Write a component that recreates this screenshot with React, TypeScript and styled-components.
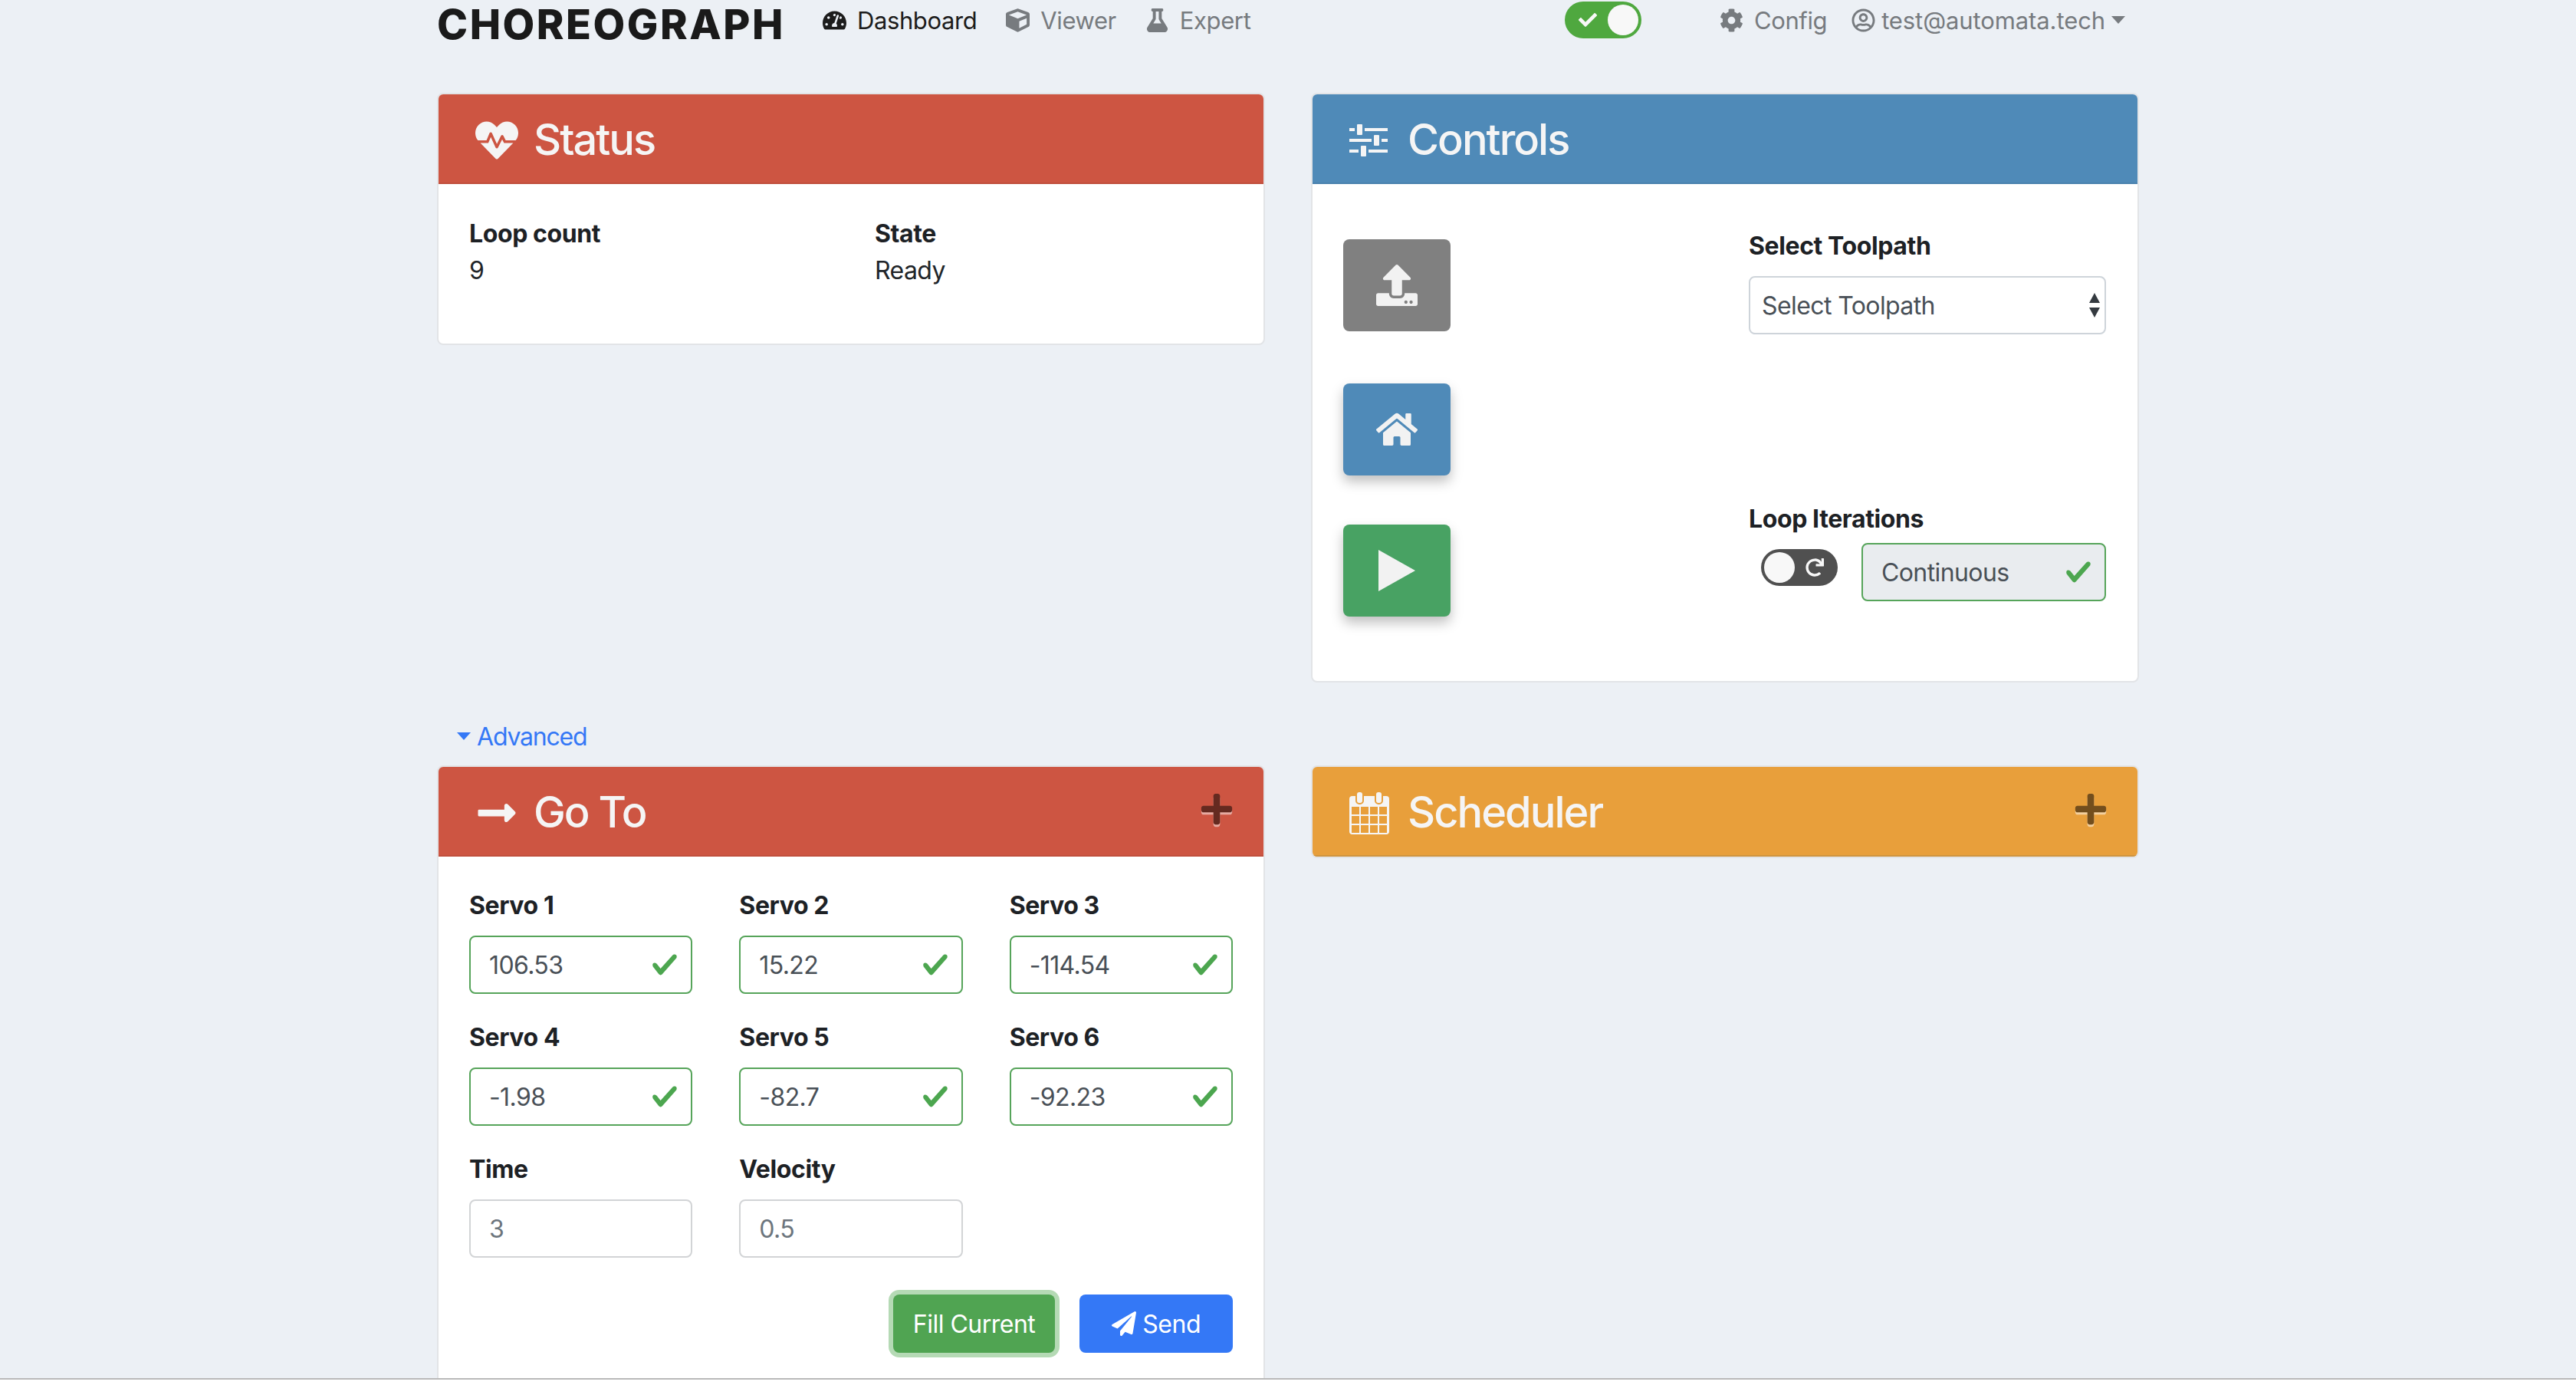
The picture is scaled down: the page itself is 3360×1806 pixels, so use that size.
import React from "react";
import styled, { createGlobalStyle } from "styled-components";
import {
  FaCheck,
  FaCog,
  FaCube,
  FaFlask,
  FaHeartbeat,
  FaHome,
  FaLongArrowAltRight,
  FaPaperPlane,
  FaPlus,
  FaRedo,
  FaRegUserCircle,
  FaTachometerAlt,
  FaUpload,
} from "react-icons/fa";

const GlobalStyle = createGlobalStyle`
  html, body {
    margin: 0;
    background: #fff;
    font-family: Inter, "Liberation Sans", sans-serif;
    font-size: 32px;
    color: #212529;
  }
  * { box-sizing: border-box; }
`;

const Page = styled.div`
  height: 1799px;
  overflow: hidden;
  background: #ecf0f5;
  border-bottom: 2px solid #b9b9b9;
`;

const Container = styled.div`
  width: 2220px;
  margin: 0 auto;
`;

const Navbar = styled.nav`
  height: 121px;
  display: flex;
  align-items: flex-start;
  padding-top: 2px;
`;

const Logo = styled.div`
  width: 503px;
  margin-top: 2px;
  line-height: 56px;
  font-size: 54px;
  font-weight: 800;
  color: #1a1a1a;
  letter-spacing: 2.5px;
  white-space: nowrap;
`;

const NavLink = styled.a<{ $active?: boolean; $gap?: number; $iconGap?: number }>`
  display: flex;
  align-items: center;
  height: 48px;
  gap: ${(p) => p.$iconGap ?? 14}px;
  margin-right: ${(p) => p.$gap ?? 38}px;
  color: ${(p) => (p.$active ? "#1c1c1c" : "#777b7f")};
  font-size: 31px;
  letter-spacing: -0.4px;
  white-space: nowrap;
  svg { font-size: 31px; }
`;

const UserLink = styled(NavLink)`
  letter-spacing: -0.1px;
`;

const NavRight = styled.div`
  margin-left: auto;
  margin-right: 18px;
  display: flex;
  align-items: flex-start;
`;

const Caret = styled.span`
  display: inline-block;
  border-top: 10px solid currentColor;
  border-left: 9px solid transparent;
  border-right: 9px solid transparent;
`;

const Toggle = styled.div<{ $on?: boolean; $top?: boolean }>`
  width: 100px;
  height: 48px;
  border-radius: 24px;
  padding: 4px;
  display: flex;
  flex-direction: ${(p) => (p.$on ? "row" : "row-reverse")};
  align-items: center;
  justify-content: space-between;
  background: ${(p) => (p.$on ? "#4fa83f" : "#505050")};
  color: #f8f8f8;
  font-size: 24px;
  margin-right: ${(p) => (p.$top ? 102 : 0)}px;
  svg { margin: 0 auto; }
`;

const Knob = styled.span`
  flex: none;
  width: 40px;
  height: 40px;
  border-radius: 50%;
  background: #f8f8f8;
`;

const Grid = styled.div`
  display: grid;
  grid-template-columns: 1080px 1080px;
  column-gap: 60px;
  align-items: start;
`;

const TopGrid = styled(Grid)`
  height: 805px;
`;

const Card = styled.section`
  background: #fff;
  border: 2px solid #e2e4e7;
  border-radius: 8px;
  overflow: hidden;
`;

const CardHeader = styled.header<{ $color: string; $edge: string }>`
  display: flex;
  align-items: center;
  height: 117px;
  padding: 4px 38px 0 48px;
  background: ${(p) => p.$color};
  border-bottom: 2px solid ${(p) => p.$edge};
  color: #f5f5f5;
`;

const HeaderIcon = styled.span`
  width: 76px;
  display: flex;
  font-size: 56px;
`;

const Title = styled.h3`
  margin: 0;
  font-size: 56px;
  font-weight: 500;
  letter-spacing: -2px;
  line-height: 1.2;
`;

const Expand = styled.span`
  margin-left: auto;
  margin-top: -10px;
  display: flex;
  font-size: 46px;
  color: #000;
  opacity: 0.5;
  filter: drop-shadow(0 3px 0 #fff);
`;

const StatusBody = styled.div`
  display: grid;
  grid-template-columns: 529px 1fr;
  padding: 41px 40px 71px;
  line-height: 48px;
`;

const Label = styled.div`
  font-weight: 700;
  line-height: 48px;
  letter-spacing: -0.4px;
  color: #1d2125;
`;

const Value = styled.div`
  letter-spacing: -0.6px;
`;

const ControlsBody = styled.div`
  display: grid;
  grid-template-columns: 529px 466px;
  padding: 57px 40px 84px;
`;

const ActionColumn = styled.div`
  display: flex;
  flex-direction: column;
  padding-top: 15px;
`;

const ActionButton = styled.button<{ $color: string; $raised?: boolean; $space?: number }>`
  width: 140px;
  height: 120px;
  margin-bottom: ${(p) => p.$space ?? 0}px;
  border: 0;
  border-radius: 8px;
  padding: 0;
  display: flex;
  align-items: center;
  justify-content: center;
  background: ${(p) => p.$color};
  color: #f2f2f2;
  font-size: 54px;
  box-shadow: ${(p) => (p.$raised ? "0 8px 16px rgba(0,0,0,.25)" : "none")};
`;

const SettingsColumn = styled.div`
  display: flex;
  flex-direction: column;
`;

const Select = styled.div`
  height: 76px;
  margin: 15px 0 217px;
  padding: 0 6px 0 15px;
  display: flex;
  align-items: center;
  justify-content: space-between;
  border: 2px solid #ced4da;
  border-radius: 8px;
  color: #495057;
  letter-spacing: -0.6px;
`;

const SelectArrows = styled.svg`
  width: 14px;
  height: 32px;
  fill: #343a40;
`;

const LoopRow = styled.div`
  display: flex;
  align-items: flex-start;
  padding-left: 16px;
  gap: 31px;
  margin-top: 7px;
`;

const LoopToggleSlot = styled.div`
  padding-top: 8px;
`;

const FieldBox = styled.div<{ $valid?: boolean; $muted?: boolean }>`
  flex: 1;
  height: 76px;
  padding: 0 16px 0 24px;
  display: flex;
  align-items: center;
  justify-content: space-between;
  border: 2px solid ${(p) => (p.$valid ? "#56a45a" : "#d2d4d6")};
  border-radius: 8px;
  background: ${(p) => (p.$muted ? "#e9ecef" : "#fff")};
  color: ${(p) => (p.$valid ? "#495057" : "#6c757d")};
  letter-spacing: -0.6px;
`;

const CheckIcon = () => (
  <svg width="36" height="36" viewBox="0 0 8 8" fill="#4ca64f">
    <path d="M2.3 6.73L.6 4.53c-.4-1.04.46-1.4 1.1-.8l1.1 1.4 3.4-3.8c.6-.63 1.6-.27 1.2.7l-4 4.6c-.43.5-.8.4-1.1.1z" />
  </svg>
);

const SlidersIcon = () => (
  <svg width="50" height="44" viewBox="0 0 50 44" fill="currentColor">
    <rect x="0" y="6" width="7" height="4" />
    <rect x="10" y="1" width="7" height="14" rx="1" />
    <rect x="20" y="6" width="30" height="4" />
    <rect x="0" y="20" width="29" height="4" />
    <rect x="32" y="15" width="7" height="14" rx="1" />
    <rect x="42" y="20" width="8" height="4" />
    <rect x="0" y="34" width="12" height="4" />
    <rect x="15" y="29" width="7" height="14" rx="1" />
    <rect x="25" y="34" width="25" height="4" />
  </svg>
);

const CalendarIcon = ({ hole }: { hole: string }) => (
  <svg width="52" height="56" viewBox="0 0 52 56" fill="currentColor">
    <rect x="0" y="6" width="52" height="50" rx="4" />
    <rect x="9" y="0" width="9" height="16" rx="4" stroke={hole} strokeWidth="2" />
    <rect x="34" y="0" width="9" height="16" rx="4" stroke={hole} strokeWidth="2" />
    {[20, 32, 44].map((y) =>
      [3, 15, 27, 39].map((x) => (
        <rect key={`${x}-${y}`} x={x} y={y} width="10" height="10" fill={hole} />
      )),
    )}
  </svg>
);

const AdvancedLink = styled.a`
  display: flex;
  align-items: center;
  gap: 8px;
  height: 48px;
  padding-left: 26px;
  margin: 10px 0 14px;
  color: #3478f6;
  letter-spacing: -1.2px;
`;

const FormBody = styled.div`
  padding: 40px 40px 80px;
`;

const FieldGrid = styled.div`
  display: grid;
  grid-template-columns: repeat(3, 1fr);
  column-gap: 61px;
  row-gap: 33px;
`;

const FieldLabel = styled(Label)`
  margin-bottom: 15px;
`;

const ButtonRow = styled.div`
  display: flex;
  justify-content: flex-end;
  gap: 32px;
  margin-top: 48px;
`;

const SolidButton = styled.button<{ $color: string; $ring?: string; $pad: number }>`
  height: 76px;
  padding: 0 ${(p) => p.$pad}px;
  display: flex;
  align-items: center;
  gap: 8px;
  border: 0;
  border-radius: 8px;
  background: ${(p) => p.$color};
  color: #fff;
  font: inherit;
  letter-spacing: -0.5px;
  box-shadow: ${(p) => (p.$ring ? `0 0 0 6px ${p.$ring}` : "none")};
`;

const servos = [
  ["Servo 1", "106.53"],
  ["Servo 2", "15.22"],
  ["Servo 3", "-114.54"],
  ["Servo 4", "-1.98"],
  ["Servo 5", "-82.7"],
  ["Servo 6", "-92.23"],
];

export default function App() {
  return (
    <Page>
      <GlobalStyle />
      <Container>
        <Navbar>
          <Logo>CHOREOGRAPH</Logo>
          <NavLink $active>
            <FaTachometerAlt />
            Dashboard
          </NavLink>
          <NavLink>
            <FaCube />
            Viewer
          </NavLink>
          <NavLink>
            <FaFlask />
            Expert
          </NavLink>
          <NavRight>
            <Toggle $on $top>
              <FaCheck />
              <Knob />
            </Toggle>
            <NavLink $gap={32}>
              <FaCog />
              Config
            </NavLink>
            <UserLink $gap={0} $iconGap={8}>
              <FaRegUserCircle />
              test@automata.tech
              <Caret />
            </UserLink>
          </NavRight>
        </Navbar>

        <TopGrid>
          <Card>
            <CardHeader $color="#cd5542" $edge="#c04f3d">
              <HeaderIcon>
                <FaHeartbeat />
              </HeaderIcon>
              <Title>Status</Title>
            </CardHeader>
            <StatusBody>
              <div>
                <Label>Loop count</Label>
                <Value>9</Value>
              </div>
              <div>
                <Label>State</Label>
                <Value>Ready</Value>
              </div>
            </StatusBody>
          </Card>

          <Card>
            <CardHeader $color="#4f8ab8" $edge="#4a82ae">
              <HeaderIcon>
                <SlidersIcon />
              </HeaderIcon>
              <Title>Controls</Title>
            </CardHeader>
            <ControlsBody>
              <ActionColumn>
                <ActionButton $color="#808080" $space={68}>
                  <FaUpload />
                </ActionButton>
                <ActionButton $color="#4f8ab8" $raised $space={64}>
                  <FaHome />
                </ActionButton>
                <ActionButton $color="#48a263" $raised>
                  <svg width="48" height="54" viewBox="0 0 48 54" fill="#f2f2f2">
                    <polygon points="0,0 48,27 0,54" />
                  </svg>
                </ActionButton>
              </ActionColumn>
              <SettingsColumn>
                <Label>Select Toolpath</Label>
                <Select>
                  Select Toolpath
                  <SelectArrows viewBox="0 0 14 32">
                    <polygon points="7,0 14,13 0,13" />
                    <polygon points="0,19 14,19 7,32" />
                  </SelectArrows>
                </Select>
                <Label>Loop Iterations</Label>
                <LoopRow>
                  <LoopToggleSlot>
                    <Toggle>
                      <FaRedo />
                      <Knob />
                    </Toggle>
                  </LoopToggleSlot>
                  <FieldBox $valid $muted>
                    Continuous
                    <CheckIcon />
                  </FieldBox>
                </LoopRow>
              </SettingsColumn>
            </ControlsBody>
          </Card>
        </TopGrid>

        <AdvancedLink>
          <Caret />
          Advanced
        </AdvancedLink>

        <Grid>
          <Card>
            <CardHeader $color="#cd5542" $edge="#c04f3d">
              <HeaderIcon>
                <FaLongArrowAltRight />
              </HeaderIcon>
              <Title>Go To</Title>
              <Expand>
                <FaPlus />
              </Expand>
            </CardHeader>
            <FormBody>
              <FieldGrid>
                {servos.map(([name, value]) => (
                  <div key={name}>
                    <FieldLabel>{name}</FieldLabel>
                    <FieldBox $valid>
                      {value}
                      <CheckIcon />
                    </FieldBox>
                  </div>
                ))}
                <div>
                  <FieldLabel>Time</FieldLabel>
                  <FieldBox>3</FieldBox>
                </div>
                <div>
                  <FieldLabel>Velocity</FieldLabel>
                  <FieldBox>0.5</FieldBox>
                </div>
              </FieldGrid>
              <ButtonRow>
                <SolidButton $color="#50a452" $ring="#b5dab5" $pad={26}>
                  Fill Current
                </SolidButton>
                <SolidButton $color="#3478f6" $pad={42}>
                  <FaPaperPlane />
                  Send
                </SolidButton>
              </ButtonRow>
            </FormBody>
          </Card>

          <Card>
            <CardHeader $color="#e89f3b" $edge="#cf9440">
              <HeaderIcon>
                <CalendarIcon hole="#e89f3b" />
              </HeaderIcon>
              <Title>Scheduler</Title>
              <Expand>
                <FaPlus />
              </Expand>
            </CardHeader>
          </Card>
        </Grid>
      </Container>
    </Page>
  );
}
